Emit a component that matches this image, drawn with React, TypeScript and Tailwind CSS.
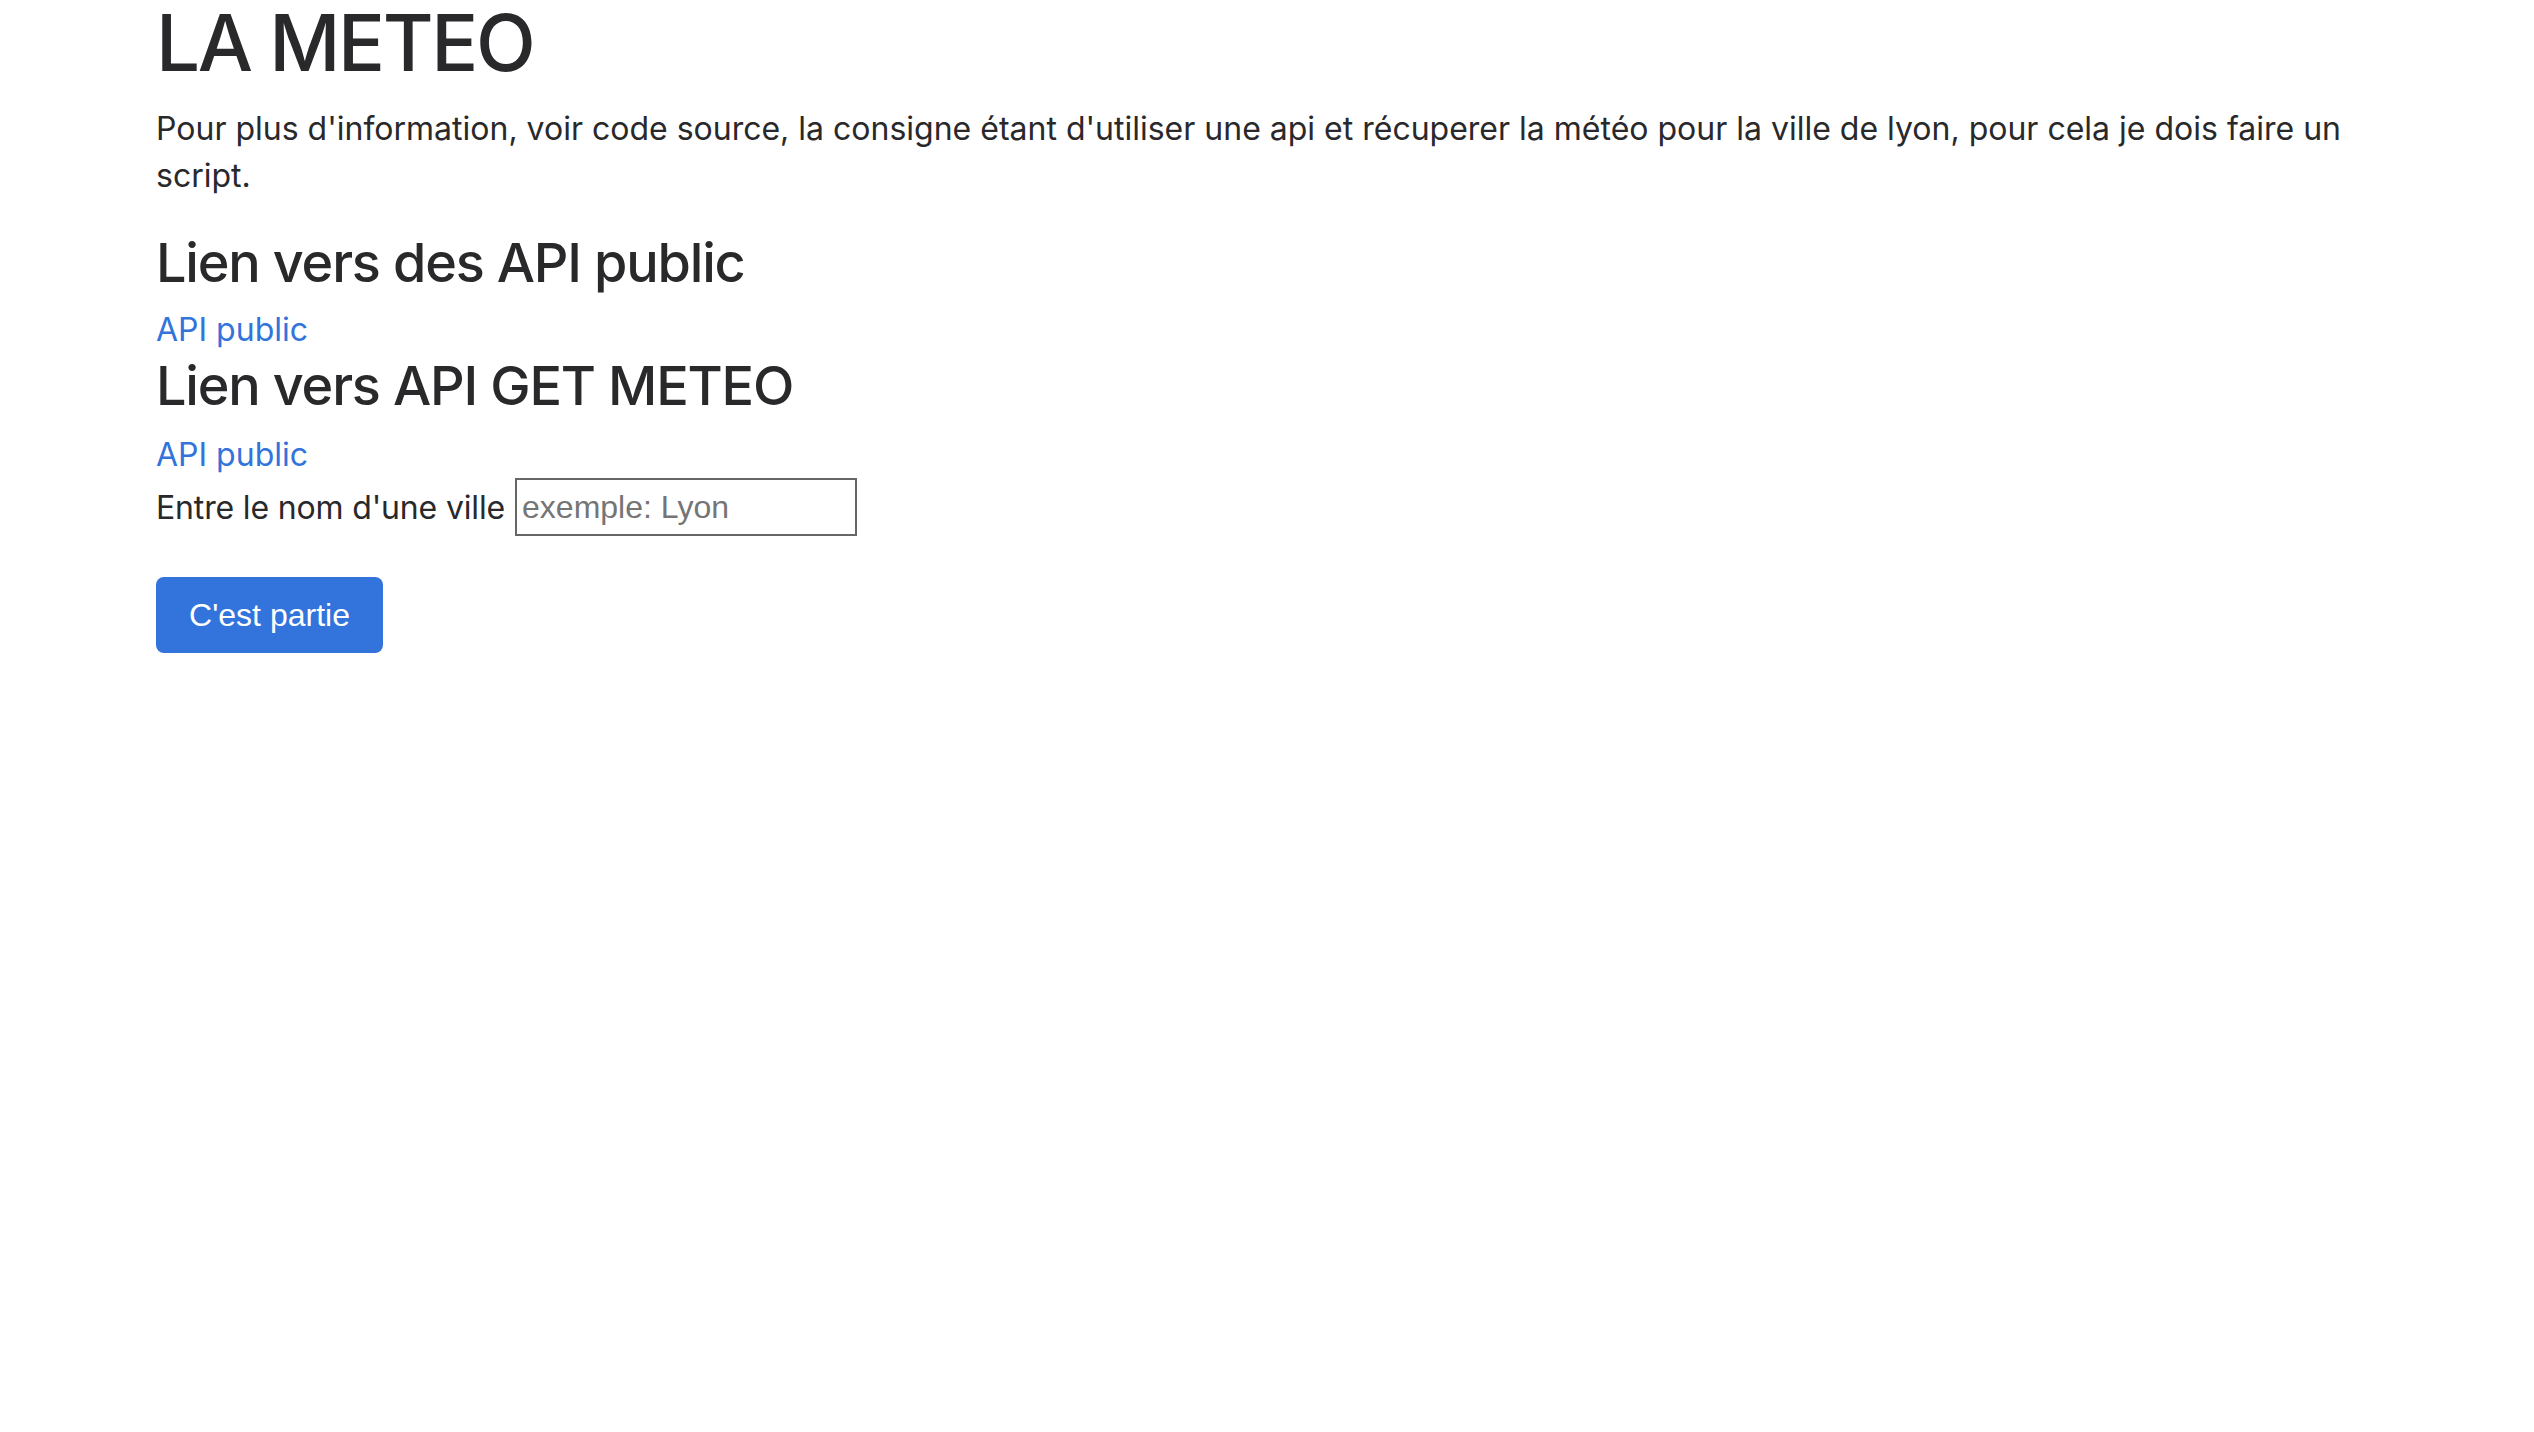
import React from "react";

export default function App() {
  return (
    <div className="min-h-screen bg-white text-[#29292b]" style={{ fontFamily: "Inter, 'Liberation Sans', sans-serif" }}>
      <div className="w-[2406px] pl-[156px]">
        <h1 className="-mt-[5px] mb-[15px] text-[78px] font-medium leading-[95px] tracking-[-0.03em]">LA METEO</h1>
        <p className="mb-[31px] text-[32px] leading-[47px]">
          Pour plus d'information, voir code source, la consigne étant d'utiliser une api et récuperer la météo pour la
          ville de lyon, pour cela je dois faire un script.
        </p>
        <h2 className="mb-[11px] text-[54px] font-medium leading-[65px] tracking-[-0.022em]">Lien vers des API public</h2>
        <a href="#" className="block w-fit text-[32px] leading-[47px] text-[#3273dc]">
          API public
        </a>
        <h2 className="mb-[13px] text-[54px] font-medium leading-[65px] tracking-[-0.022em]">Lien vers API GET METEO</h2>
        <a href="#" className="block w-fit text-[32px] leading-[47px] text-[#3273dc]">
          API public
        </a>
        <div className="flex items-center text-[32px] leading-[47px]">
          <label htmlFor="ville" className="tracking-[-0.005em]">Entre le nom d'une ville</label>
          <input
            id="ville"
            type="text"
            placeholder="exemple: Lyon"
            className="ml-[10px] h-[58px] w-[342px] border-2 border-[#666666] px-[5px] text-[32px] text-[#333] placeholder:text-[#757575]"
            style={{ fontFamily: "'Liberation Sans', Arial, sans-serif" }}
          />
        </div>
        <button
          type="button"
          className="mt-[41px] h-[76px] w-[227px] rounded-[8px] bg-[#3273dc] text-[32px] text-white"
          style={{ fontFamily: "'Liberation Sans', Arial, sans-serif" }}
        >
          C'est partie
        </button>
      </div>
    </div>
  );
}
